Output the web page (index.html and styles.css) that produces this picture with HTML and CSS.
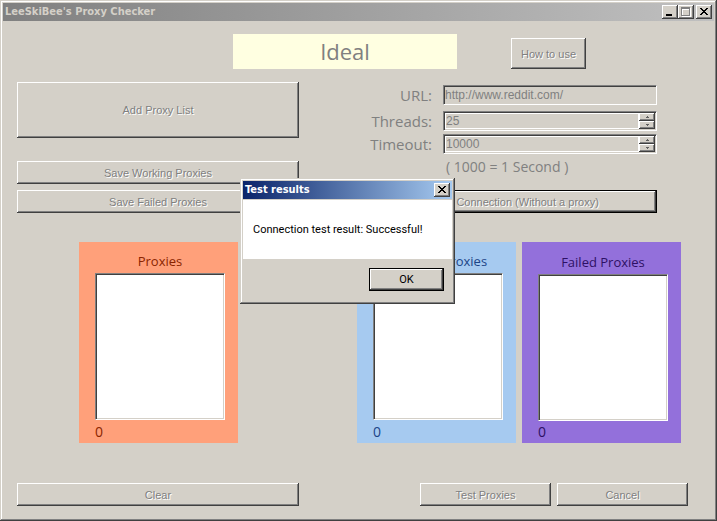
FILE: index.html
```html
<!DOCTYPE html>
<html lang="en">
<head>
<meta charset="utf-8">
<title>LeeSkiBee's Proxy Checker</title>
<link rel="stylesheet" href="styles.css">
</head>
<body>
<div class="window">
  <header class="titlebar">
    <h1 class="caption">LeeSkiBee's Proxy Checker</h1>
    <button class="sys" aria-label="Minimize"><svg width="16" height="14" shape-rendering="crispEdges"><path d="M4 9h6v2H4z"/></svg></button>
    <button class="sys" aria-label="Maximize" disabled><svg width="16" height="14" shape-rendering="crispEdges"><path fill="#fff" d="M4 3h9v9H4z"/><path fill="#808080" d="M3 2h9v9H3z"/><path fill="#fff" d="M4 4h7v6H4z"/><path fill="#d4d0c8" d="M5 5h6v5H5z"/></svg></button>
    <button class="sys sys-close" aria-label="Close"><svg width="16" height="14" shape-rendering="crispEdges"><path d="M4 3h2v1h1v1h2V4h1V3h2v1h-1v1h-1v1H9v1h1v1h1v1h1v1h-2V9H9V8H7v1H6v1H4V9h1V8h1V7h1V6H6V5H5V4H4z"/></svg></button>
  </header>
  <main class="client">
    <div class="top">
      <div class="status">Ideal</div>
      <button class="btn how" disabled>How to use</button>
    </div>
    <div class="columns">
      <div class="files">
        <button class="btn add" disabled>Add Proxy List</button>
        <button class="btn" disabled>Save Working Proxies</button>
        <button class="btn" disabled>Save Failed Proxies</button>
      </div>
      <form class="settings">
        <div class="fields">
          <label for="url">URL:</label>
          <input class="sunken url" id="url" type="text" value="http://www.reddit.com/" disabled>
          <label for="threads">Threads:</label>
          <div class="sunken spin">
            <input id="threads" type="number" value="25" disabled>
            <div class="arrows">
              <button type="button" class="arrow" aria-label="More threads" disabled><svg width="5" height="3" shape-rendering="crispEdges"><path d="M2 0h1v1h1v1H1V1h1z"/></svg></button>
              <button type="button" class="arrow" aria-label="Fewer threads" disabled><svg width="5" height="3" shape-rendering="crispEdges"><path d="M1 0h3v1H3v1H2V1H1z"/></svg></button>
            </div>
          </div>
          <label for="timeout">Timeout:</label>
          <div class="sunken spin">
            <input id="timeout" type="number" value="10000" disabled>
            <div class="arrows">
              <button type="button" class="arrow" aria-label="Longer timeout" disabled><svg width="5" height="3" shape-rendering="crispEdges"><path d="M2 0h1v1h1v1H1V1h1z"/></svg></button>
              <button type="button" class="arrow" aria-label="Shorter timeout" disabled><svg width="5" height="3" shape-rendering="crispEdges"><path d="M1 0h3v1H3v1H2V1H1z"/></svg></button>
            </div>
          </div>
          <span class="hint">( 1000 = 1 Second )</span>
        </div>
        <button type="button" class="btn default" disabled>Test Connection (Without a proxy)</button>
      </form>
    </div>
    <div class="panels">
      <section class="panel all">
        <label for="all">Proxies</label>
        <select class="sunken list" id="all" multiple></select>
        <output for="all">0</output>
      </section>
      <section class="panel working">
        <label for="working">Working Proxies</label>
        <select class="sunken list" id="working" multiple></select>
        <output for="working">0</output>
      </section>
      <section class="panel failed">
        <label for="failed">Failed Proxies</label>
        <select class="sunken list" id="failed" multiple></select>
        <output for="failed">0</output>
      </section>
    </div>
    <div class="actions">
      <button class="btn clear" disabled>Clear</button>
      <button class="btn run" disabled>Test Proxies</button>
      <button class="btn run" disabled>Cancel</button>
    </div>
  </main>
</div>
<div class="dialog" role="dialog" aria-labelledby="dialog-title">
  <header class="titlebar active">
    <h2 class="caption" id="dialog-title">Test results</h2>
    <button class="sys" aria-label="Close dialog"><svg width="16" height="14" shape-rendering="crispEdges"><path d="M4 3h2v1h1v1h2V4h1V3h2v1h-1v1h-1v1H9v1h1v1h1v1h1v1h-2V9H9V8H7v1H6v1H4V9h1V8h1V7h1V6H6V5H5V4H4z"/></svg></button>
  </header>
  <p class="message">Connection test result: Successful!</p>
  <footer class="dialog-foot"><button class="btn default ok">OK</button></footer>
</div>
</body>
</html>
```

FILE: styles.css
```css
* { box-sizing: border-box; }

body {
  margin: 0;
  position: relative;
  background: #d4d0c8;
  font-family: "Open Sans", "Noto Sans", sans-serif;
  color: #808080;
}

button, input, select { font: inherit; margin: 0; padding: 0; border: 0; border-radius: 0; }
svg { display: block; }

.window, .dialog {
  background: #d4d0c8;
  box-shadow: inset -1px -1px #404040, inset 1px 1px #d4d0c8, inset -2px -2px #808080, inset 2px 2px #fff;
}

.window {
  display: flex;
  flex-direction: column;
  min-height: 100vh;
  padding: 3px;
}

.titlebar {
  display: flex;
  align-items: center;
  height: 18px;
  padding: 0 2px;
  background: linear-gradient(to right, #808080, #c0c0c0);
  color: #d4d0c8;
}
.titlebar.active { background: linear-gradient(to right, #0a246a, #a6caf0); color: #fff; }

.caption {
  flex: 1;
  margin: 0;
  font-family: "DejaVu Sans Condensed", "DejaVu Sans", sans-serif;
  font-size: 11px;
  line-height: 18px;
  font-weight: bold;
  white-space: nowrap;
}

.sys {
  width: 16px;
  height: 14px;
  background: #d4d0c8;
  box-shadow: inset -1px -1px #404040, inset 1px 1px #fff, inset -2px -2px #808080;
}
.sys-close { margin-left: 2px; }

.btn {
  height: 23px;
  background: #d4d0c8;
  box-shadow: inset -1px -1px #404040, inset 1px 1px #fff, inset -2px -2px #808080;
  font-family: "Liberation Sans", Arial, sans-serif;
  font-size: 11px;
  white-space: nowrap;
  color: #000;
}
.btn:disabled { color: #808080; text-shadow: 1px 1px #fff; }
.btn.default {
  border: 1px solid #000;
}

.sunken {
  background: #fff;
  border: 1px solid;
  border-color: #808080 #fff #fff #808080;
  box-shadow: inset 1px 1px #404040, inset -1px -1px #d4d0c8;
}

.client {
  display: flex;
  flex-direction: column;
  padding: 13px 26px 12px 14px;
}

.top { display: flex; align-items: flex-end; margin-left: 216px; gap: 54px; }
.status {
  width: 224px;
  height: 35px;
  background: #ffffe1;
  font-size: 22px;
  line-height: 35px;
  text-align: center;
}
.how { width: 75px; height: 31px; }

.columns {
  display: grid;
  grid-template-columns: 282fr 76fr 282fr;
  margin: 13px 31px 0 0;
}
.files { display: flex; flex-direction: column; gap: 6px; }
.add { height: 56px; margin-bottom: 17px; }

.settings { grid-column: 3; display: flex; flex-direction: column; }
.fields {
  display: grid;
  grid-template-columns: 57px 1fr;
  grid-template-rows: 26px 23px 23px 23px;
  column-gap: 11px;
  align-items: start;
  flex: 1;
  padding-top: 3px;
  font-size: 15px;
  line-height: 20px;
}
.fields label { justify-self: end; white-space: nowrap; }
.sunken.url, .sunken.spin { height: 20px; width: 100%; background: #d4d0c8; }
.fields input {
  font-family: "Liberation Sans", Arial, sans-serif;
  font-size: 12px;
  color: #808080;
  background: #d4d0c8;
  min-width: 0;
}
.url { padding: 0 1px; }
.spin { display: flex; padding: 1px; }
.spin input {
  flex: 1;
  height: 16px;
  border: 1px solid #fff;
  appearance: textfield;
}
.arrows { display: flex; flex-direction: column; width: 16px; }
.arrow {
  display: grid;
  place-items: center;
  height: 8px;
  background: #d4d0c8;
  box-shadow: inset -1px -1px #404040, inset 1px 1px #fff, inset -2px -2px #808080;
}
.arrow path { fill: #606060; }
.hint { grid-column: 2; padding-left: 3px; font-size: 14px; white-space: nowrap; }

.panels { display: flex; gap: 6px; margin: 29px 7px 0 62px; }
.panel {
  display: flex;
  flex-direction: column;
  width: 159px;
  height: 201px;
  padding: 9px 13px 0 16px;
  font-size: 13px;
  line-height: 20px;
}
.panel label { align-self: center; white-space: nowrap; }
.list { flex: none; width: 130px; height: 147px; margin-top: 2px; overflow: hidden; }
.panel output { font-size: 14px; line-height: 24px; }
.all { background: #ffa07a; color: #8b2500; margin-right: auto; }
.working { background: #a6caf0; color: #1c4587; }
.failed { background: #9370db; color: #2e1065; padding-top: 10px; }
.failed output { line-height: 22px; }

.actions { display: flex; gap: 6px; margin-top: 40px; }
.clear { width: 282px; margin-right: auto; }
.run { width: 131px; }

.dialog {
  position: absolute;
  left: 240px;
  top: 178px;
  width: 215px;
  padding: 3px;
  color: #000;
}
.message {
  margin: 1px 0 0;
  padding: 0 10px;
  height: 59px;
  background: #fff;
  font-family: Roboto, sans-serif;
  font-size: 11px;
  line-height: 60px;
  white-space: nowrap;
}
.dialog-foot { display: flex; justify-content: flex-end; padding: 9px 8px 10px; }
.ok { width: 75px; height: 23px; font-family: Roboto, sans-serif; }
```
